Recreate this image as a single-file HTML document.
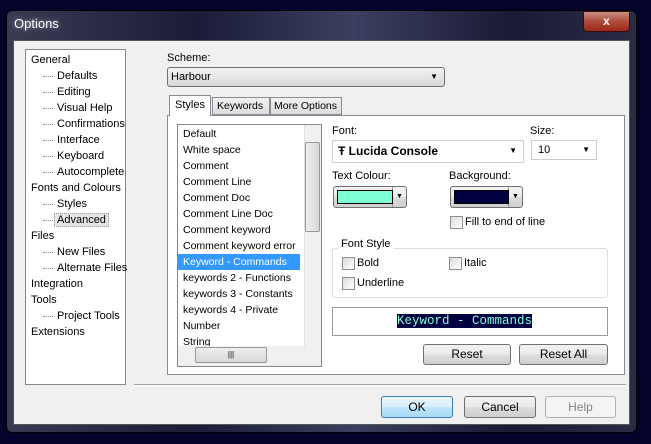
<!DOCTYPE html><html><head><style>
*{box-sizing:border-box}body{margin:0;width:651px;height:444px;background:#03032b;font-family:"Liberation Sans",sans-serif;font-size:11px;color:#000;position:relative;overflow:hidden;white-space:nowrap}
.a{position:absolute}
.frame{left:6px;top:10px;width:631px;height:423px;border-radius:6px;background:linear-gradient(90deg,#3a3a52 0%,#1a1c38 30%,#3b4060 55%,#1a1a35 80%,#2a2c45 100%);border:1px solid #000}
.client{left:13px;top:40px;width:617px;height:385px;background:#f0f0f0;border:1px solid #555}
.btn{border:1px solid #707070;border-radius:3px;background:linear-gradient(#f2f2f2,#ebebeb 50%,#dddddd 50%,#cfcfcf);text-align:center;line-height:19px;font-size:12px}
.cb{width:13px;height:13px;border:1px solid #8e8f8f;background:linear-gradient(135deg,#dcdcdc,#fff)}
.t div{height:16px;line-height:16px}
.tree div{height:16px;line-height:16px;white-space:nowrap}
.sub{padding-left:26px;position:relative}
.sub:before{content:"";position:absolute;left:12px;top:8px;width:10px;border-top:1px dotted #888}
.dd{position:absolute;right:0;top:0;bottom:0;width:14px;border-left:1px solid #999;font-size:7px;text-align:center;line-height:20px}
</style></head><body>
<div class="a frame"></div>
<div class="a" style="left:14px;top:16px;color:#fff;font-size:13px;text-shadow:0 0 6px #aab">Options</div>
<div class="a" style="left:583px;top:11px;width:47px;height:21px;border-radius:0 0 4px 4px;background:linear-gradient(#c89088,#b04a3a 50%,#9a2a1a);border:1px solid #3a0a05;color:#fff;text-align:center;font-weight:bold;font-size:12px;line-height:19px">x</div>
<div class="a client"></div>
<div class="a tree" style="left:25px;top:49px;width:101px;height:336px;background:#fff;border:1px solid #828790;padding:2px 0 0 5px;font-size:11px">
<div>General</div><div class="sub">Defaults</div><div class="sub">Editing</div><div class="sub">Visual Help</div><div class="sub">Confirmations</div><div class="sub">Interface</div><div class="sub">Keyboard</div><div class="sub">Autocomplete</div><div>Fonts and Colours</div><div class="sub">Styles</div><div class="sub"><span style="background:#e5e5e5;border:1px dotted #999;padding:0 2px;margin-left:-3px">Advanced</span></div><div>Files</div><div class="sub">New Files</div><div class="sub">Alternate Files</div><div>Integration</div><div>Tools</div><div class="sub">Project Tools</div><div>Extensions</div></div>
<div class="a" style="left:167px;top:52px">Scheme:</div>
<div class="a" style="left:167px;top:67px;width:278px;height:20px;border:1px solid #707070;border-radius:3px;background:linear-gradient(#f2f2f2,#e6e6e6 50%,#d8d8d8);padding-left:3px;line-height:18px">Harbour<span style="position:absolute;right:6px;font-size:8px">▼</span></div>
<div class="a" style="left:167px;top:115px;width:458px;height:260px;background:#fff;border:1px solid #898c95"></div>
<div class="a" style="left:169px;top:95px;width:42px;height:21px;background:#fff;border:1px solid #898c95;border-bottom:none;padding:3px 0 0 5px">Styles</div>
<div class="a" style="left:212px;top:97px;width:58px;height:18px;background:linear-gradient(#f2f2f2,#dcdcdc);border:1px solid #898c95;padding:2px 0 0 4px;font-size:10.5px">Keywords</div>
<div class="a" style="left:270px;top:97px;width:72px;height:18px;background:linear-gradient(#f2f2f2,#dcdcdc);border:1px solid #898c95;padding:2px 0 0 3px;font-size:10.5px">More Options</div>
<div class="a t" style="left:177px;top:124px;width:145px;height:243px;border:1px solid #828790;background:#fff;padding:1px 0 0 5px;overflow:hidden;font-size:10.5px">
<div>Default</div><div>White space</div><div>Comment</div><div>Comment Line</div><div>Comment Doc</div><div>Comment Line Doc</div><div>Comment keyword</div><div>Comment keyword error</div><div style="background:#3399ff;color:#fff;margin-left:-5px;padding-left:5px;width:122px">Keyword - Commands</div><div>keywords 2 - Functions</div><div>keywords 3 - Constants</div><div>keywords 4 - Private</div><div>Number</div><div>String</div></div>
<div class="a" style="left:304px;top:125px;width:17px;height:221px;background:#f0f0f0;border-left:1px solid #e0e0e0"></div>
<div class="a" style="left:305px;top:142px;width:15px;height:90px;border:1px solid #999;border-radius:2px;background:linear-gradient(90deg,#eee,#d8d8d8)"></div>
<div class="a" style="left:178px;top:346px;width:143px;height:20px;background:#f0f0f0"></div>
<div class="a" style="left:195px;top:347px;width:72px;height:16px;border:1px solid #999;border-radius:2px;background:linear-gradient(#eee,#d8d8d8);text-align:center;font-size:8px;line-height:14px">|||</div>
<div class="a" style="left:332px;top:125px">Font:</div>
<div class="a" style="left:332px;top:140px;width:192px;height:23px;border:1px solid #ccc;background:#fff;padding:3px 0 0 5px;font-weight:bold;font-size:12px">Ŧ Lucida Console<span style="position:absolute;right:6px;top:5px;font-size:8px">▼</span></div>
<div class="a" style="left:530px;top:125px">Size:</div>
<div class="a" style="left:531px;top:140px;width:66px;height:20px;border:1px solid #ccc;background:#fff;padding:3px 0 0 6px">10<span style="position:absolute;right:6px;top:4px;font-size:8px">▼</span></div>
<div class="a" style="left:332px;top:170px">Text Colour:</div>
<div class="a btn" style="left:333px;top:186px;width:74px;height:22px"><div class="dd">▼</div></div>
<div class="a" style="left:337px;top:190px;width:56px;height:14px;background:#7fffd4;border:1px solid #000"></div>
<div class="a" style="left:449px;top:170px">Background:</div>
<div class="a btn" style="left:450px;top:186px;width:73px;height:22px"><div class="dd">▼</div></div>
<div class="a" style="left:454px;top:190px;width:55px;height:14px;background:#000040;border:1px solid #000"></div>
<div class="a cb" style="left:450px;top:216px"></div><div class="a" style="left:465px;top:216px">Fill to end of line</div>
<div class="a" style="left:332px;top:248px;width:276px;height:50px;border:1px solid #d5dfe5;border-radius:3px"></div>
<div class="a" style="left:338px;top:238px;background:#fff;padding:0 3px">Font Style</div>
<div class="a cb" style="left:342px;top:257px"></div><div class="a" style="left:357px;top:257px">Bold</div>
<div class="a cb" style="left:449px;top:257px"></div><div class="a" style="left:464px;top:257px">Italic</div>
<div class="a cb" style="left:342px;top:277px"></div><div class="a" style="left:357px;top:277px">Underline</div>
<div class="a" style="left:332px;top:307px;width:276px;height:29px;border:1px solid #999"></div>
<div class="a" style="left:397px;top:314px;background:#000040;color:#7fffd4;font-family:'Liberation Mono',monospace;font-size:12.5px;line-height:14px">Keyword - Commands</div>
<div class="a btn" style="left:423px;top:344px;width:88px;height:21px">Reset</div>
<div class="a btn" style="left:519px;top:344px;width:89px;height:21px">Reset All</div>
<div class="a" style="left:134px;top:384px;width:492px;border-top:1px solid #a0a0a0;border-bottom:1px solid #fff"></div>
<div class="a btn" style="left:381px;top:396px;width:72px;height:22px;border-color:#3c7fb1;background:linear-gradient(#eaf6fd,#d9f0fc 50%,#bee6fd 50%,#a7d9f5);line-height:20px">OK</div>
<div class="a btn" style="left:464px;top:396px;width:72px;height:22px;line-height:20px">Cancel</div>
<div class="a btn" style="left:545px;top:396px;width:71px;height:22px;line-height:20px;background:#f4f4f4;border-color:#adb2b5;color:#838383">Help</div>
</body></html>
